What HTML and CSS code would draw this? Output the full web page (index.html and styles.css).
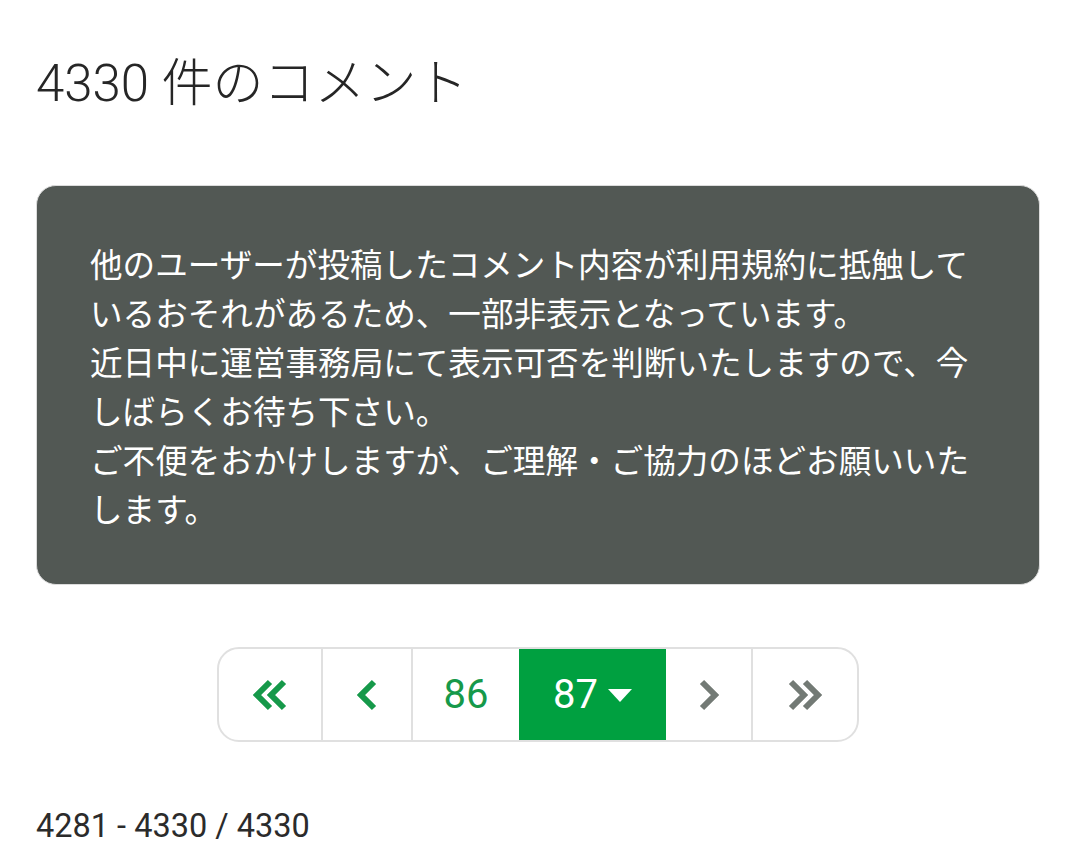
FILE: index.html
```html
<!DOCTYPE html>
<html lang="ja">
<head>
<meta charset="utf-8">
<link rel="stylesheet" href="styles.css">
</head>
<body>
<main class="page">
  <h1 class="title">4330 件のコメント</h1>
  <div class="notice">
    <p>他のユーザーが投稿したコメント内容が利用規約に抵触しているおそれがあるため、一部非表示となっています。</p>
    <p>近日中に運営事務局にて表示可否を判断いたしますので、今しばらくお待ち下さい。</p>
    <p>ご不便をおかけしますが、ご理解・ご協力のほどお願いいたします。</p>
  </div>
  <nav class="pager-wrap">
    <ul class="pager">
      <li class="cell icon-cell first green">
        <svg width="40" height="32" viewBox="0 0 40 32"><polyline points="20,3 7,16 20,29" /><polyline points="34,3 21,16 34,29" /></svg>
      </li>
      <li class="cell icon-cell prev green">
        <svg width="20" height="32" viewBox="0 0 20 32"><polyline points="17,3 4,16 17,29" /></svg>
      </li>
      <li class="cell num">86</li>
      <li class="cell num active">87<span class="caret"></span></li>
      <li class="cell icon-cell next gray">
        <svg width="20" height="32" viewBox="0 0 20 32"><polyline points="3,3 16,16 3,29" /></svg>
      </li>
      <li class="cell icon-cell last gray">
        <svg width="40" height="32" viewBox="0 0 40 32"><polyline points="6,3 19,16 6,29" /><polyline points="20,3 33,16 20,29" /></svg>
      </li>
    </ul>
  </nav>
  <p class="range">4281 - 4330 / 4330</p>
</main>
</body>
</html>
```

FILE: styles.css
```css
html, body {
  margin: 0;
  padding: 0;
  background: #ffffff;
}

.page {
  padding: 54px 40px 0 36px;
  font-family: Roboto, "Noto Sans CJK JP", sans-serif;
  color: #2b2b2b;
}

.title {
  margin: 0;
  font-size: 51px;
  font-weight: 300;
  line-height: 60px;
  color: #262626;
}

.notice {
  margin-top: 71px;
  background: #525854;
  border: 1px solid #dcdcdc;
  border-radius: 20px;
  padding: 52px 53px;
  color: #ffffff;
  font-family: "Noto Sans CJK JP", sans-serif;
  font-size: 32.6px;
  line-height: 49px;
}

.notice p {
  margin: 0;
}

.pager-wrap {
  margin-top: 62px;
  display: flex;
  justify-content: center;
}

.pager {
  list-style: none;
  margin: 0;
  padding: 0;
  display: flex;
  border: 2px solid #e0e0e0;
  border-radius: 22px;
  overflow: hidden;
  height: 91px;
}

.cell {
  display: flex;
  align-items: center;
  justify-content: center;
  border-left: 2px solid #e0e0e0;
}

.cell:first-child {
  border-left: none;
}

.icon-cell svg polyline {
  fill: none;
  stroke-width: 6;
  stroke-linejoin: miter;
  stroke-linecap: butt;
}

.green svg polyline {
  stroke: #16994a;
}

.gray svg polyline {
  stroke: #737a75;
}

.first { width: 102px; }
.prev { width: 88px; }
.next { width: 85px; }
.last { width: 104px; }

.num {
  font-family: Roboto, sans-serif;
  font-size: 40px;
  color: #16994a;
  width: 106px;
}

.active {
  background: #00a040;
  color: #ffffff;
  width: 147px;
  margin: -2px 0;
  border-left: none;
  gap: 10px;
}

.active + .cell {
  border-left: none;
}

.caret {
  width: 0;
  height: 0;
  border-left: 12px solid transparent;
  border-right: 12px solid transparent;
  border-top: 13px solid #ffffff;
  margin-top: 2px;
}

.range {
  margin: 60px 0 0;
  font-family: Roboto, sans-serif;
  font-size: 32.5px;
  line-height: 48px;
  color: #2b2b2b;
}
```
